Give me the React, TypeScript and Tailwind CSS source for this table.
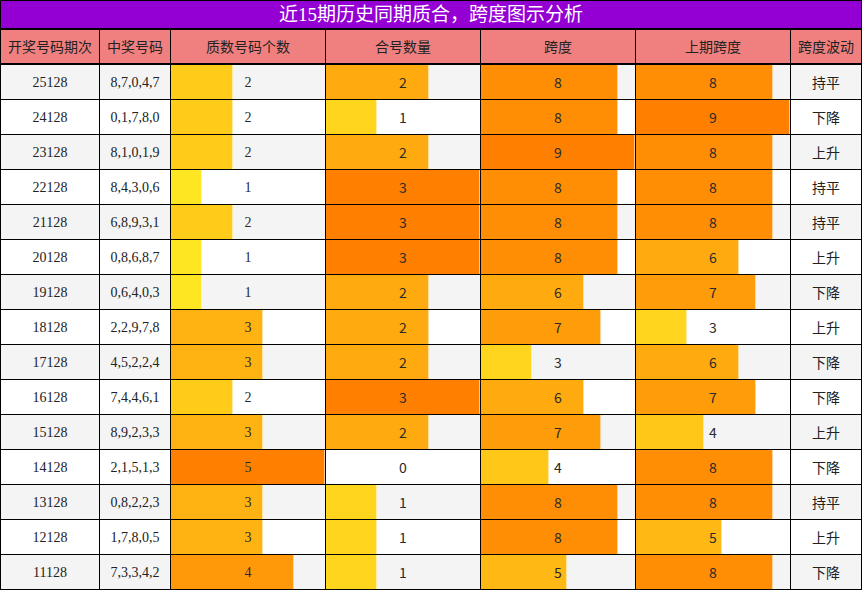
import React from "react";

type Row = {
	issue: string;
	nums: string;
	prime: number;
	composite: number;
	span: number;
	lastSpan: number;
	trend: string;
};

const rows: Row[] = [
	{ issue: "25128", nums: "8,7,0,4,7", prime: 2, composite: 2, span: 8, lastSpan: 8, trend: "持平" },
	{ issue: "24128", nums: "0,1,7,8,0", prime: 2, composite: 1, span: 8, lastSpan: 9, trend: "下降" },
	{ issue: "23128", nums: "8,1,0,1,9", prime: 2, composite: 2, span: 9, lastSpan: 8, trend: "上升" },
	{ issue: "22128", nums: "8,4,3,0,6", prime: 1, composite: 3, span: 8, lastSpan: 8, trend: "持平" },
	{ issue: "21128", nums: "6,8,9,3,1", prime: 2, composite: 3, span: 8, lastSpan: 8, trend: "持平" },
	{ issue: "20128", nums: "0,8,6,8,7", prime: 1, composite: 3, span: 8, lastSpan: 6, trend: "上升" },
	{ issue: "19128", nums: "0,6,4,0,3", prime: 1, composite: 2, span: 6, lastSpan: 7, trend: "下降" },
	{ issue: "18128", nums: "2,2,9,7,8", prime: 3, composite: 2, span: 7, lastSpan: 3, trend: "上升" },
	{ issue: "17128", nums: "4,5,2,2,4", prime: 3, composite: 2, span: 3, lastSpan: 6, trend: "下降" },
	{ issue: "16128", nums: "7,4,4,6,1", prime: 2, composite: 3, span: 6, lastSpan: 7, trend: "下降" },
	{ issue: "15128", nums: "8,9,2,3,3", prime: 3, composite: 2, span: 7, lastSpan: 4, trend: "上升" },
	{ issue: "14128", nums: "2,1,5,1,3", prime: 5, composite: 0, span: 4, lastSpan: 8, trend: "下降" },
	{ issue: "13128", nums: "0,8,2,2,3", prime: 3, composite: 1, span: 8, lastSpan: 8, trend: "持平" },
	{ issue: "12128", nums: "1,7,8,0,5", prime: 3, composite: 1, span: 8, lastSpan: 5, trend: "上升" },
	{ issue: "11128", nums: "7,3,3,4,2", prime: 4, composite: 1, span: 5, lastSpan: 8, trend: "下降" },
];

const headers = ["开奖号码期次", "中奖号码", "质数号码个数", "合号数量", "跨度", "上期跨度", "跨度波动"];

const serif = "font-['Liberation_Serif','Noto_Sans_CJK_SC',serif]";
const sans = "font-['Noto_Sans_CJK_SC',sans-serif]";

// yellow -> orange depending on how full the bar is
const barColor = (r: number) => {
	const g = Math.round(255 - 127 * r);
	const b = Math.round(44 * (1 - r));
	return `rgb(255, ${g}, ${b})`;
};

function BarCell({ value, max, bg, font }: { value: number; max: number; bg: string; font: string }) {
	const r = value / max;
	return (
		<div className={`grid items-center ${bg}`}>
			{value > 0 && (
				<div className="col-start-1 row-start-1 h-full border-r border-white/60" style={{ width: `${r * 100}%`, backgroundColor: barColor(r) }} />
			)}
			<span className={`col-start-1 row-start-1 text-center text-[14px] text-[#2a2a2a] ${font}`}>{value}</span>
		</div>
	);
}

const cols = "grid grid-cols-[98px_70px_154px_154px_154px_154px_70px] gap-x-px";

export default function App() {
	return (
		<div className="w-[862px] h-[590px] bg-black p-px flex flex-col gap-px">
			<div className={`h-[27px] mb-px bg-[#9400d3] text-white text-[19px] leading-[27px] text-center ${serif}`}>近15期历史同期质合，跨度图示分析</div>

			<div className={`h-[33px] mb-px ${cols}`}>
				{headers.map((h) => (
					<div key={h} className={`bg-[#f08080] flex items-center justify-center text-[14px] text-[#222] ${sans}`}>
						{h}
					</div>
				))}
			</div>

			{rows.map((row, i) => {
				const bg = i % 2 === 0 ? "bg-[#f4f4f4]" : "bg-white";
				return (
					<div key={row.issue} className={`h-[34px] ${cols}`}>
						<div className={`${bg} flex items-center justify-center text-[14px] text-[#222] ${serif}`}>{row.issue}</div>
						<div className={`${bg} flex items-center justify-center text-[14px] text-[#222] ${serif}`}>{row.nums}</div>
						<BarCell value={row.prime} max={5} bg={bg} font={serif} />
						<BarCell value={row.composite} max={3} bg={bg} font={sans} />
						<BarCell value={row.span} max={9} bg={bg} font={sans} />
						<BarCell value={row.lastSpan} max={9} bg={bg} font={sans} />
						<div className={`${bg} flex items-center justify-center text-[14px] text-[#222] ${sans}`}>{row.trend}</div>
					</div>
				);
			})}
		</div>
	);
}
